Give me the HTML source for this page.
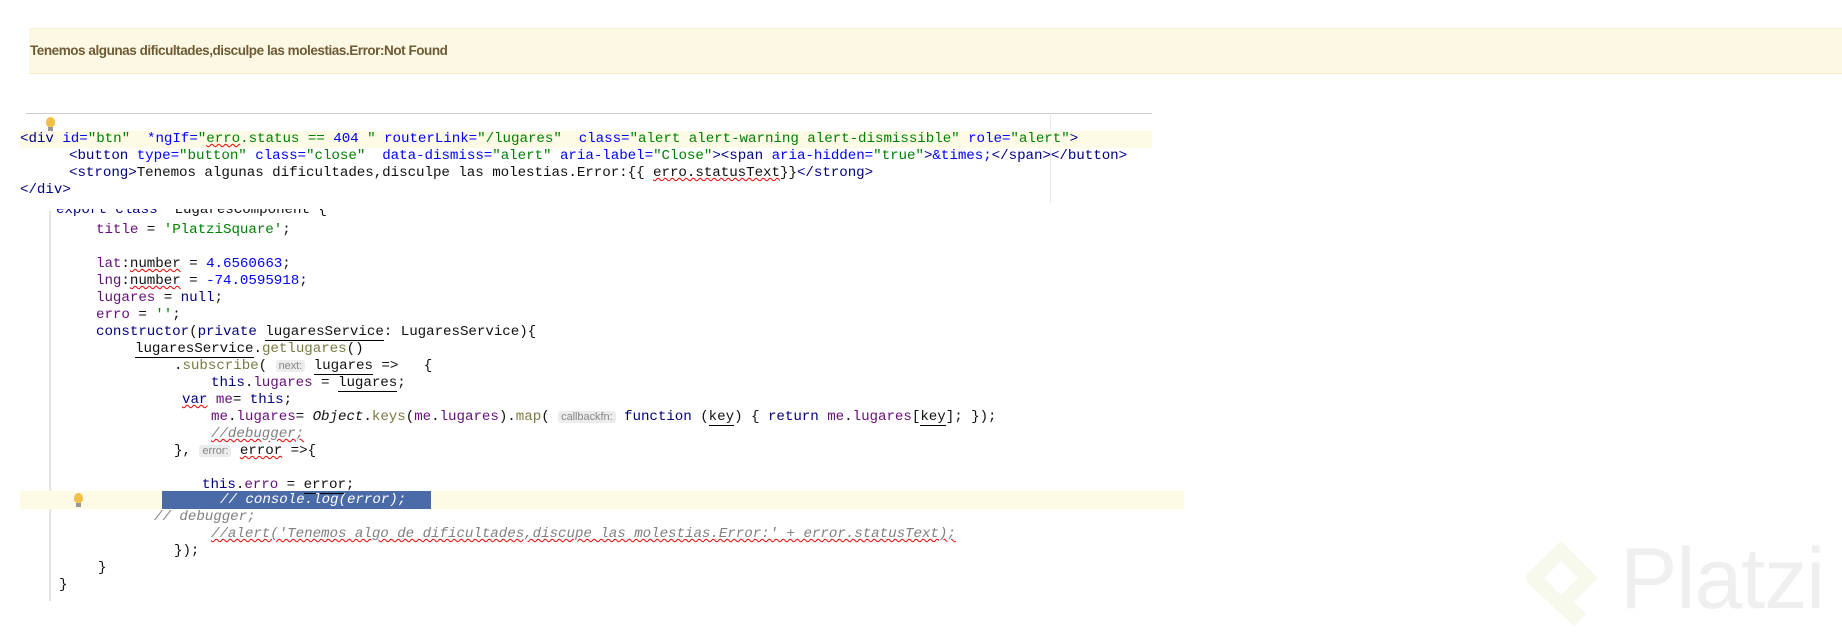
<!DOCTYPE html>
<html><head><meta charset="utf-8"><style>
body{margin:0;width:1842px;height:644px;background:#fff;position:relative;overflow:hidden;font-family:"Liberation Sans",sans-serif}
.alert{position:absolute;left:29px;top:28px;width:1813px;height:46px;background:#fcf8e3;border-top:1px solid #faf0d8;border-bottom:1px solid #f5ebd0;box-sizing:border-box}
.alert span{position:absolute;left:1px;top:14px;font-size:13.5px;color:#6e5a34;font-weight:bold;letter-spacing:-0.45px}
.code{position:absolute;font-family:"Liberation Mono",monospace;font-size:14.2px;white-space:pre;color:#111;letter-spacing:-0.05px}
.l{position:absolute;height:17px;line-height:17px}
.t{color:#000080}.a{color:#0000ff}.s{color:#008000}.n{color:#0000ff}
.k{color:#000080}.p{color:#660e7a}.c{color:#808080;font-style:italic}.m{color:#7a7a43}
.h{color:#888;background:#ececec;font-size:11px;font-family:"Liberation Sans",sans-serif;padding:0 3px;border-radius:3px}
.u{border-bottom:1px solid #000}
.w{text-decoration:underline wavy #e00;text-decoration-thickness:1px}
.bulb{position:absolute;width:9px;height:10px;background:#f2c04a;border-radius:50% 50% 40% 40%}
.bulb:after{content:"";position:absolute;left:2px;top:10px;width:5px;height:4px;background:#999}
</style></head><body>
<div class="alert"><span>Tenemos algunas dificultades,disculpe las molestias.Error:Not Found</span></div>

<div style="position:absolute;left:26px;top:113px;width:1126px;height:1px;background:#ccc"></div>
<div style="position:absolute;left:1050px;top:113px;width:1px;height:90px;background:#e6e6e6"></div>
<div style="position:absolute;left:20px;top:131px;width:1132px;height:17px;background:#fdfbe6"></div>
<div class="bulb" style="left:46px;top:117px"></div>
<div class="code">
<div class="l" style="left:20px;top:131px"><span class="t">&lt;div </span><span class="a">id=</span><span class="s">"btn"</span>  <span class="a">*ngIf=</span><span class="s">"<span class="w">erro</span>.status == </span><span class="n">404</span><span class="s"> "</span> <span class="a">routerLink=</span><span class="s">"/lugares"</span>  <span class="a">class=</span><span class="s">"alert alert-warning alert-dismissible"</span> <span class="a">role=</span><span class="s">"alert"</span><span class="t">&gt;</span></div>
<div class="l" style="left:69px;top:148px"><span class="t">&lt;button </span><span class="a">type=</span><span class="s">"button"</span> <span class="a">class=</span><span class="s">"close"</span>  <span class="a">data-dismiss=</span><span class="s">"alert"</span> <span class="a">aria-label=</span><span class="s">"Close"</span><span class="t">&gt;&lt;span </span><span class="a">aria-hidden=</span><span class="s">"true"</span><span class="t">&gt;</span><span class="a">&amp;times;</span><span class="t">&lt;/span&gt;&lt;/button&gt;</span></div>
<div class="l" style="left:69px;top:165px"><span class="t">&lt;strong&gt;</span>Tenemos algunas dificultades,disculpe las molestias.Error:{{ <span class="w">erro.statusText</span>}}<span class="t">&lt;/strong&gt;</span></div>
<div class="l" style="left:20px;top:182px"><span class="t">&lt;/div&gt;</span></div>
</div>

<div style="position:absolute;left:49px;top:211px;width:2px;height:390px;background:#e4e4e4"></div>
<div style="position:absolute;left:20px;top:491px;width:1164px;height:18px;background:#fdfbe6"></div>
<div style="position:absolute;left:162px;top:491px;width:269px;height:18px;background:#4a6aa8"></div>
<div class="bulb" style="left:74px;top:493px"></div>
<div class="code">
<div class="l" style="left:56px;top:202px;clip-path:inset(7px 0 0 0)"><span class="k">export class</span>  LugaresComponent {</div>
<div class="l" style="left:96px;top:222px"><span class="p">title</span> = <span class="s">'PlatziSquare'</span>;</div>
<div class="l" style="left:96px;top:256px"><span class="p">lat</span>:<span class="w">number</span> = <span class="n">4.6560663</span>;</div>
<div class="l" style="left:96px;top:273px"><span class="p">lng</span>:<span class="w">number</span> = <span class="n">-74.0595918</span>;</div>
<div class="l" style="left:96px;top:290px"><span class="p">lugares</span> = <span class="k">null</span>;</div>
<div class="l" style="left:96px;top:307px"><span class="p">erro</span> = <span class="s">''</span>;</div>
<div class="l" style="left:96px;top:324px"><span class="k">constructor</span>(<span class="k">private</span> <span class="u">lugaresService</span>: LugaresService){</div>
<div class="l" style="left:135px;top:341px"><span class="u">lugaresService</span>.<span class="m">getlugares</span>()</div>
<div class="l" style="left:174px;top:358px">.<span class="m">subscribe</span>( <span class="h">next:</span> <span class="u">lugares</span> =&gt;   {</div>
<div class="l" style="left:211px;top:375px"><span class="k">this</span>.<span class="p">lugares</span> = <span class="u">lugares</span>;</div>
<div class="l" style="left:182px;top:392px"><span class="k w">var</span> <span class="p">me</span>= <span class="k">this</span>;</div>
<div class="l" style="left:211px;top:409px"><span class="p">me</span>.<span class="p">lugares</span>= <i>Object</i>.<span class="m">keys</span>(<span class="p">me</span>.<span class="p">lugares</span>).<span class="m">map</span>( <span class="h">callbackfn:</span> <span class="k">function</span> (<span class="u">key</span>) { <span class="k">return</span> <span class="p">me</span>.<span class="p">lugares</span>[<span class="u">key</span>]; });</div>
<div class="l" style="left:211px;top:426px"><span class="c w">//debugger;</span></div>
<div class="l" style="left:174px;top:443px">}, <span class="h">error:</span> <span class="w">error</span> =&gt;{</div>
<div class="l" style="left:202px;top:477px"><span class="k">this</span>.<span class="p">erro</span> = <span class="u">error</span>;</div>
<div class="l" style="left:220px;top:492px;color:#fff;font-style:italic">// console.log(error);</div>
<div class="l" style="left:154px;top:509px"><span class="c">// debugger;</span></div>
<div class="l" style="left:211px;top:526px"><span class="c w">//alert('Tenemos algo de dificultades,discupe las molestias.Error:' + error.statusText);</span></div>
<div class="l" style="left:174px;top:543px">});</div>
<div class="l" style="left:98px;top:560px">}</div>
<div class="l" style="left:59px;top:577px">}</div>
</div>

<svg style="position:absolute;left:1516px;top:533px" width="90" height="105" viewBox="0 0 90 105"><path d="M45 8 L82 45 L58 69 L70 81 L58 93 L12 50 Q8 45 12 40 Z M45 28 L28 45 L45 62 L62 45 Z" fill="#f6f9ec" fill-rule="evenodd"/></svg>
<div style="position:absolute;left:1620px;top:530px;font-size:86px;color:#efefef;font-family:'Liberation Sans',sans-serif;letter-spacing:-1px">Platzi</div>
</body></html>
